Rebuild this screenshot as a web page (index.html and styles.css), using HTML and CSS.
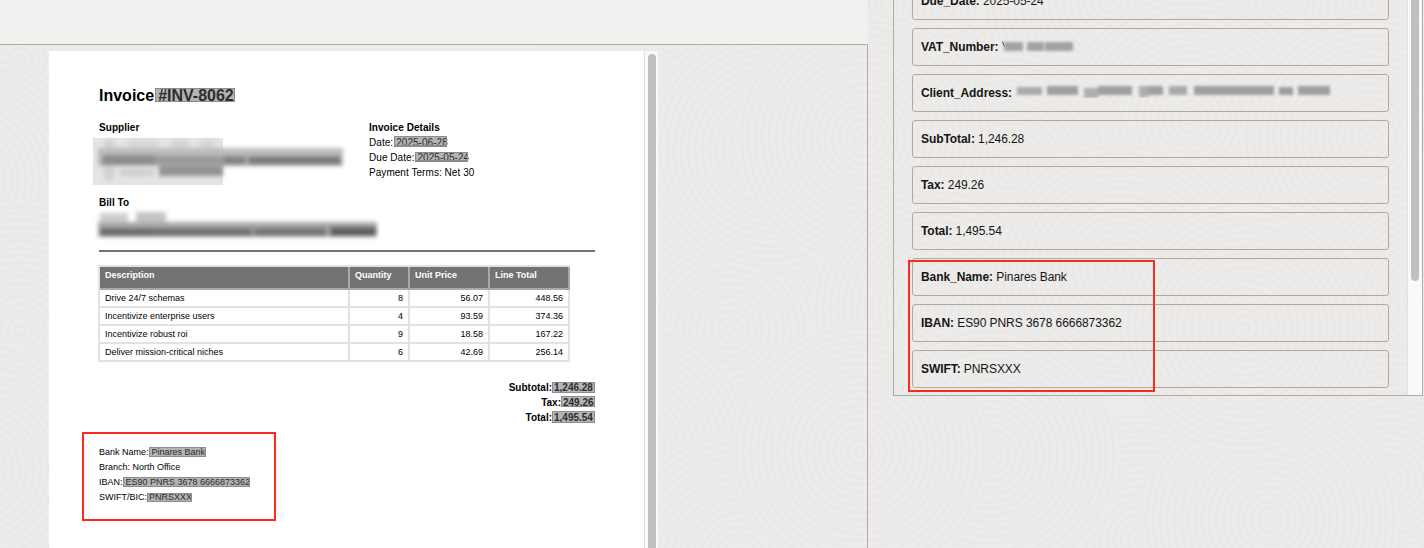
FILE: index.html
```html
<!DOCTYPE html>
<html lang="en">
<head>
<meta charset="utf-8">
<title>Invoice review</title>
<link rel="stylesheet" href="styles.css">
</head>
<body>
<svg class="texture" viewBox="0 0 1424 548" aria-hidden="true">
  <defs>
    <radialGradient id="rings" gradientUnits="userSpaceOnUse" cx="0" cy="0" r="7" spreadMethod="repeat">
      <stop offset="0" stop-color="#edecea"/>
      <stop offset=".35" stop-color="#edecea"/>
      <stop offset=".68" stop-color="#e9e8e6"/>
      <stop offset="1" stop-color="#edecea"/>
    </radialGradient>
    <circle id="disc" r="130" fill="url(#rings)"/>
  </defs>
  <use href="#disc" x="20" y="60"/><use href="#disc" x="-35" y="180"/><use href="#disc" x="20" y="330"/><use href="#disc" x="-20" y="470"/>
  <use href="#disc" x="670" y="40"/><use href="#disc" x="620" y="180"/><use href="#disc" x="730" y="330"/><use href="#disc" x="625" y="450"/><use href="#disc" x="740" y="560"/>
  <use href="#disc" x="950" y="10"/><use href="#disc" x="1110" y="0"/><use href="#disc" x="1300" y="-10"/><use href="#disc" x="1430" y="20"/>
  <use href="#disc" x="770" y="150"/><use href="#disc" x="1190" y="120"/><use href="#disc" x="1010" y="170"/><use href="#disc" x="865" y="138"/>
  <use href="#disc" x="1370" y="138"/><use href="#disc" x="1430" y="300"/><use href="#disc" x="940" y="310"/><use href="#disc" x="1120" y="270"/>
  <use href="#disc" x="1140" y="540"/><use href="#disc" x="1390" y="480"/><use href="#disc" x="1270" y="520"/><use href="#disc" x="990" y="455"/><use href="#disc" x="1245" y="328"/><use href="#disc" x="860" y="452"/>
</svg>

<div class="app">
  <section class="viewer">
    <div class="toolbar"></div>
    <div class="stage">
      <div class="doc">
        <article class="page">
          <h1 class="title">Invoice<mark class="mark mark-title">#INV-8062</mark></h1>
          <div class="parties">
            <div class="party">
              <h2 class="label">Supplier</h2>
              <svg class="redacted supplier" width="260" height="56" viewBox="0 0 260 56" aria-hidden="true">
                <defs><filter id="soft" x="-10%" y="-50%" width="120%" height="200%"><feGaussianBlur stdDeviation="2.2"/></filter></defs>
                <rect x="1" y="3" width="130" height="47" fill="#e4e4e4"/>
                <g filter="url(#soft)">
                  <rect x="12" y="5" width="10" height="40" fill="#d2d2d2"/><rect x="36" y="5" width="30" height="10" fill="#d8d8d8"/><rect x="80" y="5" width="16" height="10" fill="#d5d5d5"/><rect x="108" y="5" width="14" height="10" fill="#d5d5d5"/>
                  <rect x="6" y="13" width="245" height="18" fill="#bcbcbc"/>
                  <rect x="10" y="20" width="54" height="10" fill="#8c8c8c"/><rect x="62" y="21" width="70" height="9" fill="#9a9a9a"/><rect x="132" y="21" width="22" height="9" fill="#828282"/><rect x="156" y="21" width="93" height="9" fill="#7c7c7c"/>
                  <rect x="67" y="31" width="64" height="10" fill="#929292"/><rect x="28" y="34" width="34" height="7" fill="#cfcfcf"/>
                </g>
              </svg>
              <h2 class="label">Bill To</h2>
              <svg class="redacted client" width="290" height="36" viewBox="0 0 290 36" aria-hidden="true">
                <g filter="url(#soft)">
                  <rect x="8" y="7" width="28" height="9" fill="#cecece"/><rect x="44" y="6" width="30" height="10" fill="#c4c4c4"/>
                  <rect x="6" y="16" width="279" height="15" fill="#a8a8a8"/>
                  <rect x="8" y="22" width="54" height="8" fill="#6a6a6a"/><rect x="62" y="22" width="98" height="8" fill="#707070"/><rect x="162" y="22" width="72" height="8" fill="#737373"/><rect x="238" y="21" width="46" height="9" fill="#5f5f5f"/>
                </g>
              </svg>
            </div>
            <div class="party">
              <h2 class="label">Invoice Details</h2>
              <p class="row">Date:<mark class="mark mark-date">2025-06-28</mark></p>
              <p class="row">Due Date:<mark class="mark mark-due">2025-05-24</mark></p>
              <p class="row">Payment Terms: Net 30</p>
            </div>
          </div>
          <div class="rule"></div>
          <div class="items">
            <div class="cell head">Description</div><div class="cell head">Quantity</div><div class="cell head">Unit Price</div><div class="cell head">Line Total</div>
            <div class="cell">Drive 24/7 schemas</div><div class="cell num">8</div><div class="cell num">56.07</div><div class="cell num">448.56</div>
            <div class="cell">Incentivize enterprise users</div><div class="cell num">4</div><div class="cell num">93.59</div><div class="cell num">374.36</div>
            <div class="cell">Incentivize robust roi</div><div class="cell num">9</div><div class="cell num">18.58</div><div class="cell num">167.22</div>
            <div class="cell">Deliver mission-critical niches</div><div class="cell num">6</div><div class="cell num">42.69</div><div class="cell num">256.14</div>
          </div>
          <div class="totals">
            <p class="row">Subtotal:<mark class="mark mark-sub">1,246.28</mark></p>
            <p class="row">Tax:<mark class="mark mark-tax">249.26</mark></p>
            <p class="row">Total:<mark class="mark mark-total">1,495.54</mark></p>
          </div>
          <div class="bank">
            <p class="row">Bank Name:<mark class="mark mark-bank">Pinares Bank</mark></p>
            <p class="row">Branch: North Office</p>
            <p class="row">IBAN:<mark class="mark mark-iban">ES90 PNRS 3678 6666873362</mark></p>
            <p class="row">SWIFT/BIC:<mark class="mark mark-swift">PNRSXXX</mark></p>
            <div class="callout callout-bank"></div>
          </div>
        </article>
        <div class="track"><div class="thumb"></div></div>
      </div>
    </div>
  </section>

  <section class="results">
    <div class="fields">
      <div class="field"><b>Due_Date:</b> 2025-05-24</div>
      <div class="field"><b>VAT_Number:</b>
        <svg class="smudge" width="76" height="16" viewBox="0 0 76 16" aria-hidden="true">
          <defs><filter id="haze" x="-5%" y="-50%" width="110%" height="200%"><feGaussianBlur stdDeviation="1.7 1.5"/></filter></defs>
          <path d="M.5 3.5l1.8 5" stroke="#333" fill="none"/>
          <g filter="url(#haze)" fill="#a3a2a0"><rect x="2" y="4" width="19" height="9"/><rect x="25" y="4" width="17" height="9"/><rect x="43" y="4" width="28" height="9"/></g>
        </svg>
      </div>
      <div class="field"><b>Client_Address:</b>
        <svg class="smudge address" width="322" height="16" viewBox="0 0 322 16" aria-hidden="true">
          <g filter="url(#haze)" fill="#a09f9d"><rect x="3" y="5" width="25" height="8" opacity=".85"/><rect x="33" y="4" width="31" height="9"/><rect x="70" y="6" width="14" height="10" opacity=".8"/><rect x="84" y="4" width="34" height="9"/><rect x="125" y="4" width="10" height="11" opacity=".8"/><rect x="134" y="4" width="15" height="9"/><rect x="155" y="4" width="18" height="9" opacity=".85"/><rect x="180" y="4" width="80" height="9"/><rect x="265" y="5" width="14" height="8"/><rect x="284" y="4" width="32" height="9"/></g>
        </svg>
      </div>
      <div class="field"><b>SubTotal:</b> 1,246.28</div>
      <div class="field"><b>Tax:</b> 249.26</div>
      <div class="field"><b>Total:</b> 1,495.54</div>
      <div class="field"><b>Bank_Name:</b> Pinares Bank</div>
      <div class="field"><b>IBAN:</b> ES90 PNRS 3678 6666873362</div>
      <div class="field"><b>SWIFT:</b> PNRSXXX</div>
    </div>
    <div class="track"><div class="thumb"></div></div>
    <div class="callout callout-fields"></div>
  </section>
</div>
</body>
</html>
```
FILE: styles.css
```css
* { box-sizing: border-box; }
body {
  margin: 0;
  height: 548px;
  overflow: hidden;
  background: #edecea;
  color: #161513;
  font-family: "Liberation Sans", Arial, Helvetica, sans-serif;
}
h1, h2, p { margin: 0; }

.texture { position: absolute; inset: 0; width: 1424px; height: 548px; z-index: -1; }

.app { display: flex; width: 1424px; height: 548px; }

/* Document viewer */
.viewer { width: 868px; display: flex; flex-direction: column; }
.toolbar { height: 44px; background: #f1f0ee; flex: none; }
.stage {
  flex: 1;
  min-height: 0;
  border-top: 1px solid #aeaaa4;
  border-right: 1px solid #aeaaa8;
  padding: 6px 0 0 49px;
}
.doc { display: flex; width: 609px; height: 100%; }
.page {
  width: 595px;
  background: #fff;
  color: #000;
  padding: 36px 49px 0 50px;
  font-size: 10px;
  line-height: 15px;
}
.title { font-size: 16px; line-height: 18px; height: 33px; font-weight: bold; display: flex; white-space: nowrap; }
.label { font-size: 10px; line-height: 15px; font-weight: bold; }
.parties { display: grid; grid-template-columns: 270px 1fr; height: 130px; letter-spacing: 0.05px; }
.party { min-width: 0; }
.redacted { display: block; overflow: hidden; }
.supplier { margin: 0 0 4px -7px; }
.client { margin: -4px 0 0 -7px; }
.row { display: flex; height: 15px; white-space: nowrap; }
.rule { height: 2px; background: #737373; width: 496px; }

/* Extracted-value highlights; the frame is painted over the text */
.mark {
  position: relative;
  display: block;
  background: #b4b4b4;
  color: #2c2c2c;
  padding-left: 2px;
  flex: none;
}
.mark::after { content: ""; position: absolute; inset: 0; border: 1px solid #8c8c8c; }
.mark-title { height: 14px; line-height: 16px; width: 80px; margin: 1px 0 0 1px; padding-left: 3px; }
.mark-date { width: 53px; height: 11px; line-height: 13px; margin: 1px 0 0 1px; }
.mark-due { width: 53px; height: 10px; line-height: 11px; margin: 2px 0 0 1px; }
.mark-date::after, .mark-due::after { border-bottom-width: 2px; }
.mark-sub { width: 43px; height: 11px; line-height: 11px; margin-top: 2px; }
.mark-total { width: 43px; height: 12px; line-height: 13px; margin-top: 1px; }
.mark-tax { width: 34px; height: 11px; line-height: 13px; margin-top: 1px; }
.mark-bank { width: 57px; height: 10px; line-height: 11px; padding-left: 3px; margin-top: 2px; }
.mark-iban { width: 127px; height: 10px; line-height: 11px; padding-left: 3px; margin-top: 2px; }
.mark-swift { width: 45px; height: 9px; line-height: 9px; margin-top: 3px; }

/* Line items */
.items {
  display: grid;
  grid-template-columns: 250px 60px 80px 80px;
  grid-template-rows: 23px repeat(4, 18px);
  width: 472px;
  margin: 13px 0 0 -1px;
  border: solid #e2e2e2;
  border-width: 2px 0 0 2px;
  font-size: 9px;
  line-height: 16px;
}
.cell { border: solid #e2e2e2; border-width: 0 2px 2px 0; padding: 0 5px; white-space: nowrap; }
.cell.num { text-align: right; }
.cell.head { background: #737373; color: #fff; font-weight: bold; border-color: #a8a8a8; }

.totals {
  display: flex;
  flex-direction: column;
  align-items: flex-end;
  font-weight: bold;
  margin-top: 18px;
}
.bank { margin-top: 20px; position: relative; font-size: 9px; }

/* Scrollbars */
.track { width: 14px; background: #f9f9f9; border-left: 1px solid #e0e0e0; padding: 3px 2px 0 3px; flex: none; }
.thumb { width: 8px; height: 520px; background: #c0c0c0; border-radius: 4px; }

/* Extraction results */
.results {
  position: relative;
  display: flex;
  width: 530px;
  height: 396px;
  margin-left: 25px;
  border: solid #aeaaa8;
  border-width: 0 1px 1px;
}
.fields {
  flex: 1;
  display: flex;
  flex-direction: column;
  justify-content: flex-end;
  gap: 8px;
  padding: 0 18px 7px;
  overflow: hidden;
}
.field {
  flex: none;
  height: 38px;
  border: 1px solid #aeaaa3;
  border-radius: 3px;
  padding: 0 8px;
  font-size: 12px;
  line-height: 36px;
  letter-spacing: -0.07px;
  white-space: nowrap;
}
.results .track { width: 15px; padding-top: 0; }
.results .thumb { height: 281px; border-radius: 0 0 4px 4px; }
.smudge { vertical-align: middle; margin-top: -3px; }
.smudge.address { margin: -7px 0 0 -1px; }

/* Red annotation frames */
.callout { position: absolute; border: 2px solid #fc2a1c; }
.callout-bank { left: -17px; top: -13px; width: 194px; height: 89px; }
.callout-fields { left: 14px; top: 260px; width: 247px; height: 132px; }
```
